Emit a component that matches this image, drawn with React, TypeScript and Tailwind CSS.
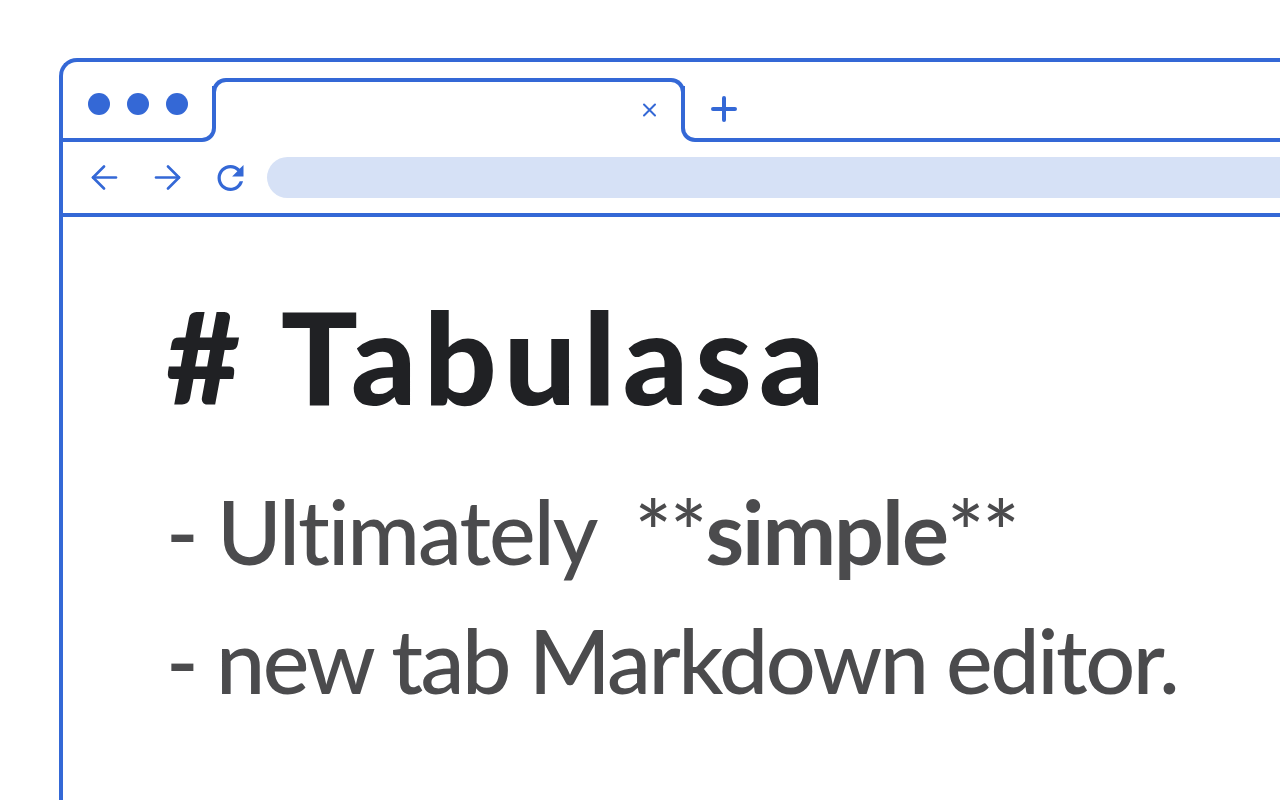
import React from "react";

const BLUE = "#3468d6";

function BackIcon() {
  return (
    <svg width="27" height="25" viewBox="0 0 27 25" fill="none" stroke={BLUE} strokeWidth="2.6" strokeLinecap="round" strokeLinejoin="round">
      <path d="M25 12.5H2" />
      <path d="M13 1.5 2 12.5l11 11" />
    </svg>
  );
}

function ForwardIcon() {
  return (
    <svg width="27" height="25" viewBox="0 0 27 25" fill="none" stroke={BLUE} strokeWidth="2.6" strokeLinecap="round" strokeLinejoin="round">
      <path d="M2 12.5h23" />
      <path d="M14 1.5l11 11-11 11" />
    </svg>
  );
}

function ReloadIcon() {
  return (
    <svg width="27" height="26" viewBox="4 4 16 16" fill={BLUE}>
      <path d="M17.65 6.35C16.2 4.9 14.21 4 12 4c-4.42 0-7.99 3.58-7.99 8s3.57 8 7.99 8c3.730 0 6.84-2.55 7.73-6h-2.08c-.82 2.33-3.04 4-5.65 4-3.31 0-6-2.69-6-6s2.69-6 6-6c1.66 0 3.14.69 4.22 1.78L13 11h7V4l-2.35 2.35z" />
    </svg>
  );
}

export default function App() {
  return (
    <div className="h-[800px] w-[1280px] overflow-hidden bg-white pl-[59px] pt-[58px]">
      {/* Browser frame */}
      <div className="flex h-[760px] w-[1260px] flex-col rounded-tl-[18px] border-l-4 border-t-4 border-[#3468d6]">
        {/* Tab strip */}
        <div className="flex h-[80px] items-start">
          <div className="mt-[24px] flex h-[56px] w-[153px] shrink-0 items-start gap-[17px] rounded-br-[14px] border-b-4 border-r-4 border-[#3468d6] pl-[25px] pt-[7px]">
            <span className="h-[22px] w-[22px] rounded-full bg-[#3468d6]" />
            <span className="h-[22px] w-[22px] rounded-full bg-[#3468d6]" />
            <span className="h-[22px] w-[22px] rounded-full bg-[#3468d6]" />
          </div>
          <div className="-ml-[4px] mt-[16px] flex h-[50px] w-[473px] shrink-0 justify-end rounded-t-[14px] border-l-4 border-r-4 border-t-4 border-[#3468d6] bg-white pr-[24px] pt-[20px]">
            <svg width="15" height="16" viewBox="0 0 15 16" stroke={BLUE} strokeWidth="2" strokeLinecap="round">
              <path d="M2 2.5l11 11M13 2.5l-11 11" />
            </svg>
          </div>
          <div className="-ml-[4px] mt-[24px] flex h-[56px] flex-1 items-start rounded-bl-[14px] border-b-4 border-l-4 border-[#3468d6] pl-[26px] pt-[10px]">
            <svg width="26" height="26" viewBox="0 0 26 26" stroke={BLUE} strokeWidth="4" strokeLinecap="round">
              <path d="M13 2v22M2 13h22" />
            </svg>
          </div>
        </div>

        {/* Navigation bar */}
        <div className="flex h-[75px] items-center border-b-4 border-[#3468d6]">
          <div className="flex items-center gap-[36px] pl-[28px]">
            <BackIcon />
            <ForwardIcon />
            <ReloadIcon />
          </div>
          <div className="ml-[23px] h-[41px] flex-1 rounded-l-full bg-[#d6e1f6]" />
        </div>

        {/* Page content */}
        <div className="flex-1 pl-[103px] pt-[75px] font-['Lato',sans-serif]">
          <h1 className="text-[128px] font-black leading-none tracking-[7px] text-[#202124]"># Tabulasa</h1>
          <div className="mt-[47px] text-[88px] font-medium leading-[129px] text-[#4b4b4d]">
            <p className="whitespace-pre tracking-[-2px]">- Ultimately  **<span className="font-bold">simple</span>**</p>
            <p className="tracking-[-2.5px]">- new tab Markdown editor.</p>
          </div>
        </div>
      </div>
    </div>
  );
}
